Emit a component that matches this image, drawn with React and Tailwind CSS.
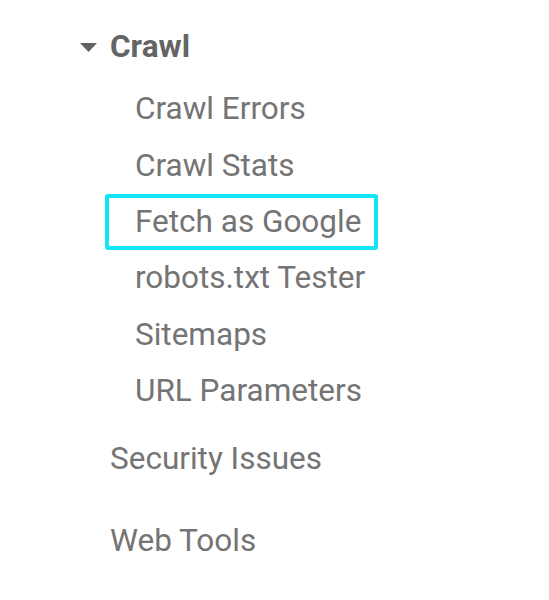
import React from 'react';

const items = [
  'Crawl Errors',
  'Crawl Stats',
  'Fetch as Google',
  'robots.txt Tester',
  'Sitemaps',
  'URL Parameters',
];

const App = () => {
  return (
    <div
      className="w-[549px] h-[600px] bg-white text-[#747474] overflow-hidden"
      style={{ fontFamily: 'Roboto, "Noto Sans", sans-serif' }}
    >
      {/* Section header */}
      <div className="flex items-center h-[56px] mt-[19px] pl-[80px] text-[#646464]">
        <svg width="17" height="9" viewBox="0 0 17 9" className="mr-[13px]">
          <path d="M0 0 L17 0 L8.5 9 Z" fill="#616161" />
        </svg>
        <span className="text-[31.5px] font-bold leading-none">Crawl</span>
      </div>

      {/* Crawl sub items */}
      <div className="pl-[105px] mt-[6px]">
        {items.map((label) => (
          <div
            key={label}
            className={
              'w-[273px] h-[56.3px] flex items-center pl-[26px] border-4 rounded-[3px] text-[31.5px] leading-none ' +
              (label === 'Fetch as Google' ? 'border-[#12e6f4]' : 'border-transparent')
            }
          >
            {label}
          </div>
        ))}
      </div>

      <div className="pl-[110px]">
        <div className="h-[79px] flex items-center text-[31.5px] leading-none">Security Issues</div>
        <div className="h-[86px] flex items-center text-[31.5px] leading-none">Web Tools</div>
      </div>
    </div>
  );
};

export default App;
